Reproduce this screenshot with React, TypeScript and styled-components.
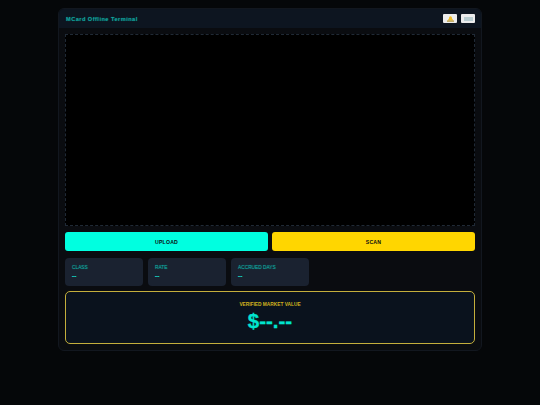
import styled, { createGlobalStyle } from "styled-components";

const GlobalStyle = createGlobalStyle`
  html, body {
    margin: 0;
    padding: 0;
    background: #050709;
    font-family: "Liberation Sans", Arial, sans-serif;
  }
`;

const Page = styled.div`
  width: 540px;
  height: 405px;
  padding-top: 8px;
  box-sizing: border-box;
  overflow: hidden;
`;

const Terminal = styled.div`
  width: 424px;
  height: 343px;
  margin: 0 auto;
  box-sizing: border-box;
  background: #0a0c10;
  border: 1px solid #12171f;
  border-radius: 6px;
  overflow: hidden;
`;

const Header = styled.div`
  height: 19px;
  display: flex;
  align-items: center;
  justify-content: space-between;
  padding: 0 6px 0 7px;
  background: #0d1520;
`;

const Title = styled.div`
  font-size: 5.6px;
  font-weight: 700;
  letter-spacing: 0.48px;
  color: #10a29b;
  text-shadow: 0 0 1px rgba(16, 162, 155, 0.6);
`;

const HeaderActions = styled.div`
  display: flex;
  gap: 4px;
`;

const HeaderButton = styled.button`
  width: 14px;
  height: 9px;
  padding: 0;
  border: none;
  border-radius: 1px;
  background: #ececec;
  display: flex;
  align-items: center;
  justify-content: center;
`;

const Body = styled.div`
  padding: 6px;
  display: flex;
  flex-direction: column;
`;

const Viewport = styled.div`
  height: 192px;
  box-sizing: border-box;
  background: #000;
  border: 1px dashed #202a36;
`;

const Actions = styled.div`
  display: flex;
  gap: 4px;
  margin-top: 6px;
`;

const ActionButton = styled.button<{ $color: string }>`
  flex: 1;
  height: 19px;
  padding: 0;
  border: none;
  border-radius: 3px;
  background: ${(p) => p.$color};
  color: #0a0c10;
  font-family: inherit;
  font-size: 5.2px;
  font-weight: 700;
  letter-spacing: 0.2px;
`;

const Stats = styled.div`
  display: flex;
  gap: 5px;
  margin-top: 7px;
`;

const StatCard = styled.div`
  width: 78px;
  height: 28px;
  box-sizing: border-box;
  padding: 6.5px 7px;
  background: #1a2230;
  border-radius: 4px;
`;

const StatLabel = styled.div`
  font-size: 4.8px;
  line-height: 6px;
  color: #10a29b;
  text-shadow: 0 0 1px rgba(16, 162, 155, 0.7);
`;

const StatValue = styled.div`
  margin-top: 1px;
  font-size: 6.4px;
  line-height: 8px;
  font-weight: 700;
  color: #17c9bd;
  -webkit-text-stroke: 0.2px #17c9bd;
`;

const ValuePanel = styled.div`
  height: 53px;
  margin-top: 5px;
  box-sizing: border-box;
  padding-top: 10px;
  background: #0a121d;
  border: 1px solid #c4ae3c;
  border-radius: 5px;
  text-align: center;
`;

const ValueLabel = styled.div`
  font-size: 4.8px;
  line-height: 6px;
  font-weight: 700;
  color: #d0b21e;
`;

const ValueAmount = styled.div`
  margin-top: 1px;
  font-size: 20.5px;
  line-height: 23px;
  font-weight: 700;
  color: #00e5cf;
  -webkit-text-stroke: 0.3px #00e5cf;
`;

const stats = [
  { label: "CLASS", value: "--" },
  { label: "RATE", value: "--" },
  { label: "ACCRUED DAYS", value: "--" },
];

export default function App() {
  return (
    <>
      <GlobalStyle />
      <Page>
        <Terminal>
          <Header>
            <Title>MCard Offline Terminal</Title>
            <HeaderActions>
              <HeaderButton aria-label="alerts">
                <svg width="9" height="6" viewBox="0 0 9 6">
                  <path d="M4.5 0.3 C3.3 0.3 3 1.4 3 2.6 L1.6 4.4 H7.4 L6 2.6 C6 1.4 5.7 0.3 4.5 0.3Z" fill="#eebd2c" />
                  <rect x="1" y="4.6" width="7" height="1" fill="#a8871f" />
                </svg>
              </HeaderButton>
              <HeaderButton aria-label="keyboard">
                <svg width="9" height="4" viewBox="0 0 9 4">
                  <rect width="9" height="4" fill="#b9cdd1" />
                </svg>
              </HeaderButton>
            </HeaderActions>
          </Header>
          <Body>
            <Viewport />
            <Actions>
              <ActionButton $color="#00ffe0">UPLOAD</ActionButton>
              <ActionButton $color="#ffd600">SCAN</ActionButton>
            </Actions>
            <Stats>
              {stats.map((s) => (
                <StatCard key={s.label}>
                  <StatLabel>{s.label}</StatLabel>
                  <StatValue>{s.value}</StatValue>
                </StatCard>
              ))}
            </Stats>
            <ValuePanel>
              <ValueLabel>VERIFIED MARKET VALUE</ValueLabel>
              <ValueAmount>$--.--</ValueAmount>
            </ValuePanel>
          </Body>
        </Terminal>
      </Page>
    </>
  );
}
